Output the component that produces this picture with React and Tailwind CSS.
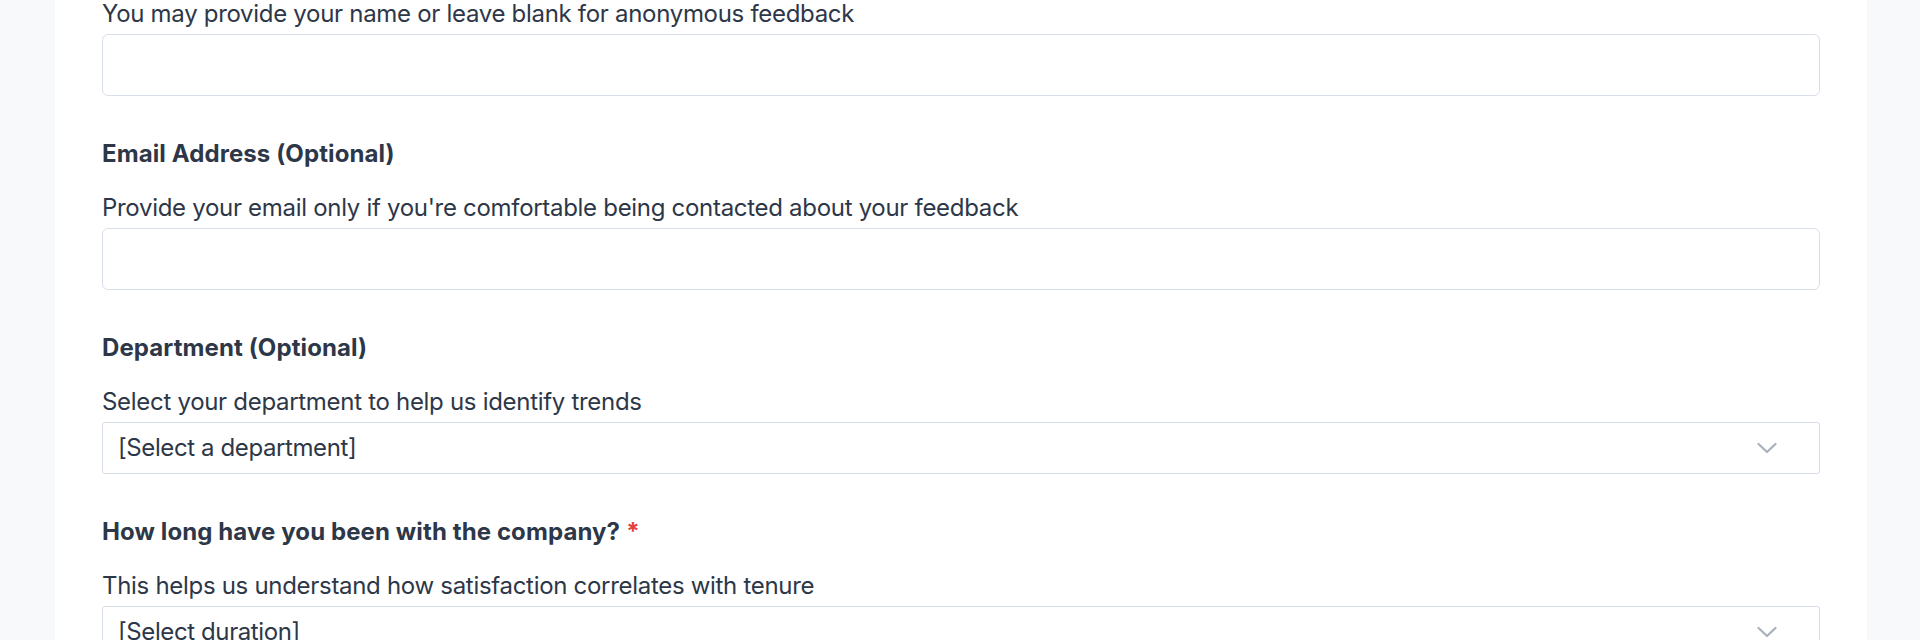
import React, { useState } from "react";

const textFont = { fontFamily: "Inter, 'Noto Sans', 'Liberation Sans', sans-serif" };

function Chevron() {
  return (
    <svg width="20" height="11" viewBox="0 0 20 11" fill="none">
      <path d="M1.5 1.5 L10 9.5 L18.5 1.5" stroke="#a9b0ba" strokeWidth="2.2" strokeLinecap="round" strokeLinejoin="round" />
    </svg>
  );
}

function Field({ label, required, help, children, first }) {
  return (
    <div className={first ? "mt-[-4px]" : "mt-[40px]"}>
      {label && (
        <div className="mb-[18px] text-[24px] leading-[36px] font-bold tracking-[0.1px] text-[#2d3748]">
          {label}
          {required && <span className="ml-[6px] text-[#e53e3e]">*</span>}
        </div>
      )}
      <p className="mb-[2px] text-[24px] leading-[36px] tracking-[-0.3px] text-[#2d3748]">{help}</p>
      {children}
    </div>
  );
}

function TextInput({ value, onChange }) {
  return (
    <input
      type="text"
      value={value}
      onChange={(e) => onChange(e.target.value)}
      className="block h-[62px] w-full rounded-[6px] border-[1.5px] border-[#d9dfe8] bg-white px-4 text-[24px] text-[#2d3748] outline-none"
    />
  );
}

function SelectBox({ value, onChange, placeholder, options }) {
  return (
    <div className="relative">
      <select
        value={value}
        onChange={(e) => onChange(e.target.value)}
        className="block h-[52px] w-full appearance-none rounded-[3px] border-[1.5px] border-[#d9dfe8] bg-white pl-[15px] text-[24px] tracking-[-0.4px] text-[#2d3748] outline-none"
        style={textFont}
      >
        <option value="">{placeholder}</option>
        {options.map((o) => (
          <option key={o} value={o}>
            {o}
          </option>
        ))}
      </select>
      <div className="pointer-events-none absolute right-[43px] top-1/2 -translate-y-1/2">
        <Chevron />
      </div>
    </div>
  );
}

export default function App() {
  const [name, setName] = useState("");
  const [email, setEmail] = useState("");
  const [dept, setDept] = useState("");
  const [tenure, setTenure] = useState("");

  return (
    <div className="h-screen overflow-hidden bg-[#f7f9fb] pl-[55px] pr-[53px]" style={textFont}>
      <div className="min-h-screen bg-white px-[47px] pb-10">
        <Field first help="You may provide your name or leave blank for anonymous feedback">
          <TextInput value={name} onChange={setName} />
        </Field>

        <Field label="Email Address (Optional)" help="Provide your email only if you're comfortable being contacted about your feedback">
          <TextInput value={email} onChange={setEmail} />
        </Field>

        <Field label="Department (Optional)" help="Select your department to help us identify trends">
          <SelectBox
            value={dept}
            onChange={setDept}
            placeholder="[Select a department]"
            options={["Engineering", "Sales", "Marketing", "Operations", "Human Resources"]}
          />
        </Field>

        <Field label="How long have you been with the company?" required help="This helps us understand how satisfaction correlates with tenure">
          <SelectBox
            value={tenure}
            onChange={setTenure}
            placeholder="[Select duration]"
            options={["Less than 1 year", "1-3 years", "3-5 years", "More than 5 years"]}
          />
        </Field>
      </div>
    </div>
  );
}
